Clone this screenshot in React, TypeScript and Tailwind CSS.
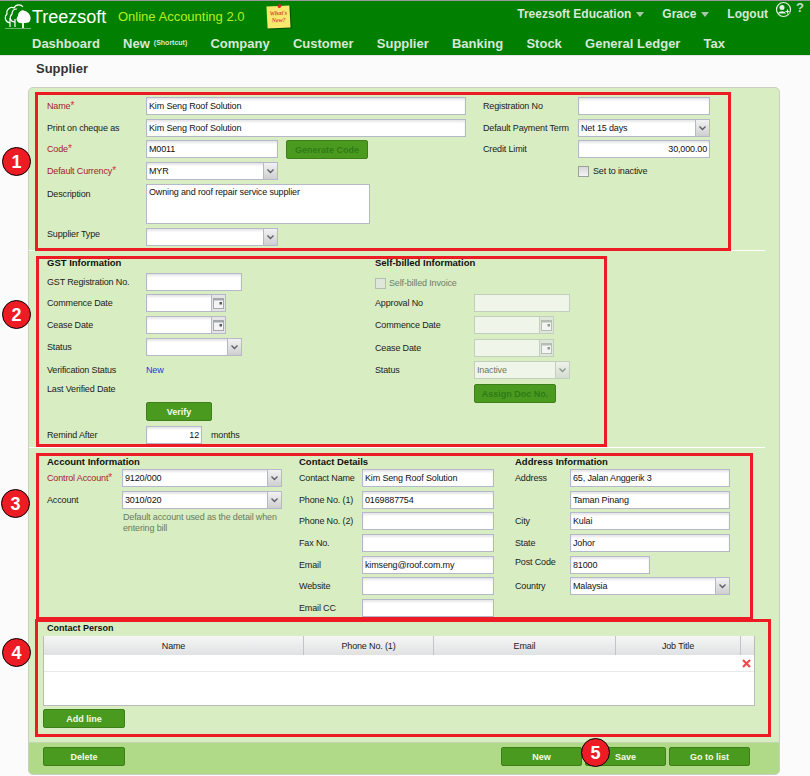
import React from "react";

function Chevron({ muted }: { muted?: boolean }) {
  return (
    <svg width="9" height="6" viewBox="0 0 9 6">
      <path d="M1.5 1.5 L4.5 4.5 L7.5 1.5" fill="none" stroke={muted ? "#8a9a88" : "#5c6066"} strokeWidth="1.4" />
    </svg>
  );
}

function CalIcon({ muted }: { muted?: boolean }) {
  const c = muted ? "#b4beb2" : "#a4a7ac";
  return (
    <svg width="11" height="11" viewBox="0 0 11 11">
      <rect x="0.5" y="0.5" width="10" height="10" fill="#f4f4f4" stroke={c} />
      <rect x="0.5" y="0.5" width="10" height="2" fill={c} />
      <rect x="6.5" y="4" width="2.5" height="2.5" fill={muted ? "#8f9a8f" : "#55585d"} />
    </svg>
  );
}

function Field({ w, value, right, disabled }: { w: string; value?: string; right?: boolean; disabled?: boolean }) {
  return (
    <div
      className={`${w} h-full flex items-center px-[2px] border whitespace-nowrap overflow-hidden ${right ? "justify-end" : ""} ${
        disabled
          ? "border-[#c3cfbd] bg-[#eff6e9]"
          : "border-[#b5b8c8] bg-white shadow-[inset_0_2px_2px_rgba(120,120,140,0.18)] text-[#111]"
      }`}
    >
      {value}
    </div>
  );
}

function Select({ w, value, disabled }: { w: string; value?: string; disabled?: boolean }) {
  return (
    <div
      className={`${w} h-full flex border ${
        disabled ? "border-[#c3cfbd] bg-[#eff6e9] text-[#6a7a66]" : "border-[#b5b8c8] bg-white shadow-[inset_0_2px_2px_rgba(120,120,140,0.18)] text-[#111]"
      }`}
    >
      <div className="flex-1 flex items-center px-[2px] whitespace-nowrap overflow-hidden">{value}</div>
      <div
        className={`w-[14px] flex items-center justify-center border-l ${
          disabled ? "border-[#c3cfbd] bg-gradient-to-b from-[#eef3ea] to-[#d5dcd0]" : "border-[#b5b8c8] bg-gradient-to-b from-[#f2f2f2] to-[#cfcfcf]"
        }`}
      >
        <Chevron muted={disabled} />
      </div>
    </div>
  );
}

function DateField({ disabled }: { disabled?: boolean }) {
  return (
    <div className={`w-[80px] h-full flex border ${disabled ? "border-[#c3cfbd] bg-[#eff6e9]" : "border-[#b5b8c8] bg-white shadow-[inset_0_2px_2px_rgba(120,120,140,0.18)]"}`}>
      <div className="flex-1" />
      <div className={`w-[14px] flex items-center justify-center border-l ${disabled ? "border-[#c3cfbd] bg-[#dfe6da]" : "border-[#b5b8c8] bg-[#e4e4e4]"}`}>
        <CalIcon muted={disabled} />
      </div>
    </div>
  );
}

function Btn({ label, w, disabled }: { label: string; w: string; disabled?: boolean }) {
  return (
    <div
      className={`${w} h-[19px] shrink-0 rounded-[2px] border border-[#3f7f1b] bg-[#4b9a20] flex items-center justify-center text-[9px] tracking-normal font-bold ${
        disabled ? "text-[#2f7a16]" : "text-[#f2fbe8]"
      }`}
    >
      {label}
    </div>
  );
}

function Row({ label, labelW, labelClass, red, star, className, children }: { label?: string; labelW: string; labelClass?: string; red?: boolean; star?: boolean; className?: string; children: React.ReactNode }) {
  return (
    <div className={`flex items-center h-[18px] ${className ?? ""}`}>
      <div className={`${labelW} ${labelClass ?? ""} shrink-0 whitespace-nowrap ${red ? "text-[#a8202c]" : "text-[#222]"}`}>
        {label}
        {star && <span className="text-[#d8303c] text-[10px]">*</span>}
      </div>
      {children}
    </div>
  );
}

function Heading({ children, className }: { children: React.ReactNode; className?: string }) {
  return <div className={`font-bold text-[#111] text-[9.5px] tracking-normal leading-[12px] ${className ?? ""}`}>{children}</div>;
}

const NAV = ["Company", "Customer", "Supplier", "Banking", "Stock", "General Ledger", "Tax"];

function Logo() {
  return (
    <svg width="28" height="27" viewBox="0 0 28 27" fill="none">
      <path d="M6 20 C1 19 0 14 3 11 C2 7 6 3 10 5 C12 1 17 1 19 4" stroke="#fff" strokeWidth="1.2" />
      <path d="M6 24 V15 M11 24 V16" stroke="#fff" strokeWidth="1.2" />
      <path d="M11 19 C6 19 5 14 8 11 C8 8 10 6 13 6" stroke="#fff" strokeWidth="1.2" />
      <path d="M19 20 C13 21 11 16 14 13 C14 9 18 6 21 8 C25 9 28 14 26 18 C25 20 22 20 19 20 Z" fill="#fff" />
      <path d="M19 19 V25" stroke="#fff" strokeWidth="1.8" />
      <path d="M1 25.5 H27" stroke="#6fb56f" strokeWidth="1" />
    </svg>
  );
}

function Tri() {
  return <span className="inline-block w-0 h-0 border-x-[4px] border-x-transparent border-t-[5px] border-t-[#a9c6a9] ml-[5px] mt-[1px]" />;
}

function Marker({ n, className }: { n: number; className: string }) {
  return (
    <div className={`absolute w-[29px] h-[29px] rounded-full bg-[#ed1c24] border border-black flex items-center justify-center text-white text-[18px] tracking-normal font-bold ${className}`}>
      {n}
    </div>
  );
}

export default function App() {
  return (
    <div className="relative w-[810px] h-[776px] overflow-hidden bg-[#fbfbfb] [font-family:Liberation_Sans,Arial,sans-serif] text-[9px] tracking-[-0.15px] leading-[12px] text-[#222]">
      {/* Header */}
      <header className="h-[56px] border-t border-[#999] border-b border-b-[#e4e4e4] bg-[#007f00] tracking-normal">
        <div className="h-[31px] flex items-center pl-[4px] relative">
          <Logo />
          <span className="text-[18px] text-white font-medium leading-none w-[86px] whitespace-nowrap">Treezsoft</span>
          <span className="text-[13px] text-[#b6ef1e] w-[149px] whitespace-nowrap">Online Accounting 2.0</span>
          <div className="relative w-[23px] h-[22px] rotate-[-3deg] bg-[#f8e86e] shadow-[1px_1px_1px_rgba(0,0,0,0.4)] text-[#dc4038] text-[6px] leading-[7px] [font-family:Liberation_Serif,serif] italic font-bold text-center pt-[4px]">
            What's<br />New?
            <span className="absolute left-[11px] top-[-2px] w-[4px] h-[4px] rounded-full bg-[#d8262c]" />
          </div>
          <div className="ml-auto mb-[6px] flex items-center text-[12px] font-bold text-[#d8e8d8] pr-[42px]">
            <span>Treezsoft Education</span>
            <Tri />
            <span className="ml-[18px]">Grace</span>
            <Tri />
            <span className="ml-[18px]">Logout</span>
          </div>
          <div className="absolute left-[775px] top-[0px]">
            <svg width="17" height="17" viewBox="0 0 17 17" fill="none">
              <circle cx="8.5" cy="8.5" r="7" stroke="#e8f2e8" strokeWidth="1.2" />
              <circle cx="7" cy="6.5" r="2.5" fill="#e8f2e8" />
              <path d="M3 12.5 C4 9.5 10 9.5 11 12.5 Z" fill="#e8f2e8" />
              <path d="M10.5 10.5 H14.5 M12.5 8.5 V12.5" stroke="#007f00" strokeWidth="2.6" />
              <path d="M10.5 10.5 H14.5 M12.5 8.5 V12.5" stroke="#e8f2e8" strokeWidth="1.2" />
            </svg>
          </div>
          <span className="absolute left-[796px] top-[1px] text-[13px] font-bold text-[#c9dcc9]">?</span>
        </div>
        <nav className="h-[23px] flex items-center gap-[23.2px] pl-[32px] text-[13px] font-bold text-[#d8e8d8] whitespace-nowrap">
          <span>Dashboard</span>
          <span className="flex items-start">
            New<span className="text-[7px] leading-[9px] ml-[4px]">(Shortcut)</span>
          </span>
          {NAV.map((n) => (
            <span key={n}>{n}</span>
          ))}
        </nav>
      </header>

      <h1 className="pl-[36px] pt-[5px] h-[31px] text-[13px] leading-[15px] font-bold tracking-normal text-[#333]">Supplier</h1>

      {/* Panel */}
      <main className="ml-[28px] w-[752px] h-[688px] border border-[#c9cfc4] rounded-[5px] bg-[#d8edc1] overflow-hidden flex flex-col">
        {/* Section 1 */}
        <section className="h-[163px] pt-[9px] pl-[18px] flex border-b border-white mr-[14px]">
          <div className="w-[436px]">
            <Row label="Name" labelW="w-[99px]" red star><Field w="w-[320px]" value="Kim Seng Roof Solution" /></Row>
            <Row label="Print on cheque as" labelW="w-[99px]" className="mt-[4px]"><Field w="w-[320px]" value="Kim Seng Roof Solution" /></Row>
            <div className="flex mt-[3px] h-[18px] items-start">
              <Row label="Code" labelW="w-[99px]" red star><Field w="w-[132px]" value="M0011" /></Row>
              <div className="ml-[8px]"><Btn label="Generate Code" w="w-[82px]" disabled /></div>
            </div>
            <Row label="Default Currency" labelW="w-[99px]" red star className="mt-[4px]"><Select w="w-[132px]" value="MYR" /></Row>
            <div className="flex mt-[4px] h-[40px]">
              <div className="w-[99px] pt-[4px]">Description</div>
              <div className="w-[224px] border border-[#b5b8c8] bg-white px-[2px] pt-[1px] text-[#111]">Owning and roof repair service supplier</div>
            </div>
            <Row label="Supplier Type" labelW="w-[99px]" labelClass="mb-[6px]" className="mt-[4px]"><Select w="w-[132px]" /></Row>
          </div>
          <div>
            <Row label="Registration No" labelW="w-[95px]"><Field w="w-[132px]" /></Row>
            <Row label="Default Payment Term" labelW="w-[95px]" className="mt-[4px]"><Select w="w-[132px]" value="Net 15 days" /></Row>
            <Row label="Credit Limit" labelW="w-[95px]" className="mt-[3px]"><Field w="w-[132px]" value="30,000.00" right /></Row>
            <div className="flex items-center mt-[4px] ml-[95px] h-[18px]">
              <div className="w-[11px] h-[11px] border border-[#9aa09a] bg-gradient-to-b from-[#d8d8d8] to-[#f4f4f4] mr-[4px]" />
              Set to inactive
            </div>
          </div>
        </section>

        {/* Section 2 */}
        <section className="h-[197px] pl-[18px] pt-[6px] flex border-b border-white mr-[14px]">
          <div className="w-[328px]">
            <Heading>GST Information</Heading>
            <Row label="GST Registration No." labelW="w-[99px]" className="mt-[4px]"><Field w="w-[96px]" /></Row>
            <Row label="Commence Date" labelW="w-[99px]" className="mt-[3px]"><DateField /></Row>
            <Row label="Cease Date" labelW="w-[99px]" className="mt-[4px]"><DateField /></Row>
            <Row label="Status" labelW="w-[99px]" className="mt-[4px]"><Select w="w-[96px]" /></Row>
            <Row label="Verification Status" labelW="w-[99px]" className="mt-[5px]"><span className="text-[#2a35d8]">New</span></Row>
            <Row label="Last Verified Date" labelW="w-[99px]" className="mt-[1px]"><span /></Row>
            <div className="ml-[99px] mt-[4px]"><Btn label="Verify" w="w-[66px]" /></div>
            <Row label="Remind After" labelW="w-[99px]" className="mt-[5px]">
              <Field w="w-[56px]" value="12" right />
              <span className="ml-[9px]">months</span>
            </Row>
          </div>
          <div className="w-[232px]">
            <Heading>Self-billed Information</Heading>
            <div className="flex items-center h-[18px] mt-[5px] text-[#6f7f6a]">
              <div className="w-[11px] h-[11px] border border-[#b4bdb0] bg-[#dfe6da] mr-[3px]" />
              Self-billed Invoice
            </div>
            <Row label="Approval No" labelW="w-[99px]" className="mt-[2px]"><Field w="w-[96px]" disabled /></Row>
            <Row label="Commence Date" labelW="w-[99px]" className="mt-[4px]"><DateField disabled /></Row>
            <Row label="Cease Date" labelW="w-[99px]" className="mt-[5px]"><DateField disabled /></Row>
            <Row label="Status" labelW="w-[99px]" className="mt-[4px]"><Select w="w-[96px]" value="Inactive" disabled /></Row>
            <div className="ml-[99px] mt-[5px]"><Btn label="Assign Doc No." w="w-[82px]" disabled /></div>
          </div>
        </section>

        {/* Section 3 */}
        <section className="h-[172px] pl-[18px] pt-[8px] flex">
          <div className="w-[252px]">
            <Heading>Account Information</Heading>
            <Row label="Control Account" labelW="w-[75px]" red star className="mt-[1px]"><Select w="w-[160px]" value="9120/000" /></Row>
            <Row label="Account" labelW="w-[75px]" className="mt-[4px]"><Select w="w-[160px]" value="3010/020" /></Row>
            <div className="ml-[76px] mt-[3px] w-[165px] text-[#6b7a62] leading-[11px]">Default account used as the detail when entering bill</div>
          </div>
          <div className="w-[216px]">
            <Heading>Contact Details</Heading>
            {[
              ["Contact Name", "Kim Seng Roof Solution", "mt-[1px]"],
              ["Phone No. (1)", "0169887754", "mt-[4px]"],
              ["Phone No. (2)", "", "mt-[3px]"],
              ["Fax No.", "", "mt-[4px]"],
              ["Email", "kimseng@roof.com.my", "mt-[4px]"],
              ["Website", "", "mt-[3px]"],
              ["Email CC", "", "mt-[4px]"],
            ].map(([l, v, m]) => (
              <Row key={l} label={l} labelW="w-[63px]" className={m}><Field w="w-[132px]" value={v} /></Row>
            ))}
          </div>
          <div>
            <Heading>Address Information</Heading>
            <Row label="Address" labelW="w-[55px]" className="mt-[1px]"><Field w="w-[160px]" value="65, Jalan Anggerik 3" /></Row>
            <Row labelW="w-[55px]" className="mt-[4px]"><Field w="w-[160px]" value="Taman Pinang" /></Row>
            <Row label="City" labelW="w-[55px]" className="mt-[3px]"><Field w="w-[160px]" value="Kulai" /></Row>
            <Row label="State" labelW="w-[55px]" className="mt-[4px]"><Field w="w-[160px]" value="Johor" /></Row>
            <Row label="Post Code" labelW="w-[55px]" labelClass="mb-[6px]" className="mt-[4px]"><Field w="w-[80px]" value="81000" /></Row>
            <Row label="Country" labelW="w-[55px]" className="mt-[3px]"><Select w="w-[160px]" value="Malaysia" /></Row>
          </div>
        </section>

        {/* Section 4 */}
        <section className="flex-1 pl-[14px] pt-[2px]">
          <Heading className="ml-[4px] text-[9px]">Contact Person</Heading>
          <div className="mt-[2px] w-[712px] h-[70px] bg-white border-b border-r border-l border-[#bbb] flex flex-col">
            <div className="h-[19px] flex items-stretch bg-gradient-to-b from-[#f6f6f6] to-[#e0e1e3] text-[#222] text-center">
              <div className="w-[260px] border-r border-[#c2c4c6] flex items-center justify-center">Name</div>
              <div className="w-[130px] border-r border-[#c2c4c6] flex items-center justify-center">Phone No. (1)</div>
              <div className="w-[182px] border-r border-[#c2c4c6] flex items-center justify-center">Email</div>
              <div className="w-[125px] border-r border-[#c2c4c6] flex items-center justify-center">Job Title</div>
              <div className="flex-1" />
            </div>
            <div className="h-[17px] border-b border-[#e8e8e8] flex items-center justify-end pr-[3px]">
              <svg width="9" height="9" viewBox="0 0 9 9">
                <path d="M1 1 L8 8 M8 1 L1 8" stroke="#ef4a50" strokeWidth="2.2" />
              </svg>
            </div>
          </div>
          <div className="mt-[3px]"><Btn label="Add line" w="w-[82px]" /></div>
        </section>

        {/* Footer */}
        <footer className="h-[32px] shrink-0 border-t border-[#c3d6b2] bg-[#b0da87] flex items-start pt-[4px] pl-[14px] pr-[29px] gap-[3px]">
          <Btn label="Delete" w="w-[82px]" />
          <div className="flex-1" />
          <Btn label="New" w="w-[81px]" />
          <Btn label="Save" w="w-[81px]" />
          <Btn label="Go to list" w="w-[81px]" />
        </footer>
      </main>

      {/* Annotations */}
      <div className="absolute left-[35px] top-[92px] w-[696px] h-[159px] border-[3px] border-[#ed1c24]" />
      <div className="absolute left-[36px] top-[256px] w-[571px] h-[191px] border-[3px] border-[#ed1c24]" />
      <div className="absolute left-[36px] top-[453px] w-[717px] h-[167px] border-[3px] border-[#ed1c24]" />
      <div className="absolute left-[35px] top-[619px] w-[736px] h-[118px] border-[3px] border-[#ed1c24]" />
      <Marker n={1} className="left-[2px] top-[147px]" />
      <Marker n={2} className="left-[2px] top-[300px]" />
      <Marker n={3} className="left-[1px] top-[489px]" />
      <Marker n={4} className="left-[2px] top-[638px]" />
      <Marker n={5} className="left-[581px] top-[738px]" />
    </div>
  );
}
